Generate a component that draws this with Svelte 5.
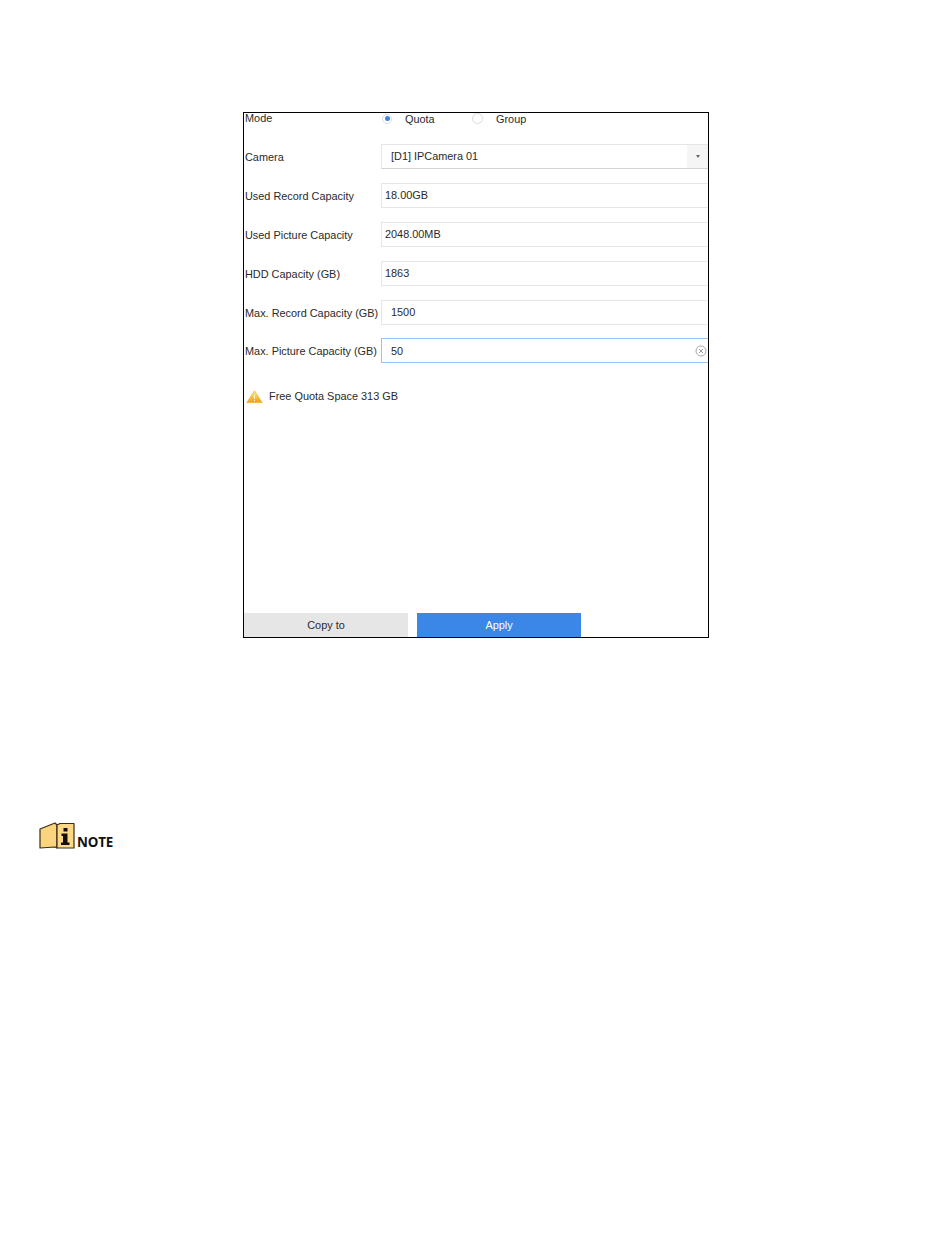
<script>
  const rows = [
    { label: 'Used Record Capacity', value: '18.00GB' },
    { label: 'Used Picture Capacity', value: '2048.00MB' },
    { label: 'HDD Capacity (GB)', value: '1863' },
    { label: 'Max. Record Capacity (GB)', value: '1500', indent: true }
  ];
</script>

<main class="page">
  <section class="panel">
    <div class="mode">
      <span class="label">Mode</span>
      <div class="radios">
        <span class="radio on"></span><span class="opt quota">Quota</span>
        <span class="radio"></span><span class="opt">Group</span>
      </div>
    </div>

    <div class="row">
      <span class="label">Camera</span>
      <div class="field select">
        <span class="val indent">[D1] IPCamera 01</span>
        <span class="arrow"><i></i></span>
      </div>
    </div>

    {#each rows as r}
      <div class="row">
        <span class="label">{r.label}</span>
        <div class="field"><span class="val" class:indent={r.indent}>{r.value}</span></div>
      </div>
    {/each}

    <div class="row">
      <span class="label">Max. Picture Capacity (GB)</span>
      <div class="field focus">
        <span class="val indent">50</span>
        <svg class="clear" width="12" height="12" viewBox="0 0 12 12">
          <circle cx="6" cy="6" r="5" fill="none" stroke="#a8a8a8" />
          <path d="M4 4l4 4M8 4l-4 4" stroke="#999" fill="none" />
        </svg>
      </div>
    </div>

    <div class="warn">
      <svg width="17" height="14" viewBox="0 0 17 14">
        <defs>
          <linearGradient id="w" x1="0" y1="0" x2="0" y2="1">
            <stop offset="0" stop-color="#fdf0b8" />
            <stop offset=".5" stop-color="#f8c73f" />
            <stop offset="1" stop-color="#ee9d12" />
          </linearGradient>
        </defs>
        <path d="M8.5 .8 16.2 12.6H.8z" fill="url(#w)" stroke="#f0b030" stroke-width=".7" stroke-linejoin="round" />
        <rect x="8" y="5" width="1" height="4" fill="#fff6d8" />
        <rect x="8" y="10" width="1" height="1.200" fill="#fff6d8" />
      </svg>
      <span>Free Quota Space 313 GB</span>
    </div>

    <div class="buttons">
      <button class="copy">Copy to</button>
      <button class="apply">Apply</button>
    </div>
  </section>

  <div class="note">
    <svg width="36" height="28" viewBox="0 0 36 28">
      <path d="M1 7 L16 1 L18 3 V26 L16 25 L1 26z" fill="#fbd47e" stroke="#3a2e16" stroke-width="1.200" stroke-linejoin="round" />
      <path d="M18 3 L21 1.500 H35 V26 H21 L18 26z" fill="#fdd987" stroke="#3a2e16" stroke-width="1.200" stroke-linejoin="round" />
      <rect x="24.500" y="6" width="4" height="3.500" fill="#111" />
      <path d="M22.500 11.500h6v9h2v2.500h-8.500v-2.500h2v-6.500h-1.500z" fill="#111" />
    </svg>
    <span>NOTE</span>
  </div>
</main>

<style>
  :global(body) {
    margin: 0;
    background: #fff;
  }

  .page {
    height: 1241px;
    box-sizing: border-box;
    padding-top: 112px;
    font-family: "Liberation Sans", Arial, sans-serif;
    font-size: 10.9px;
    color: #2a2a2a;
    overflow: hidden;
  }

  .panel {
    margin-left: 243px;
    width: 466px;
    height: 526px;
    box-sizing: border-box;
    border: 1px solid #000;
    display: flex;
    flex-direction: column;
    overflow: hidden;
  }

  .mode {
    display: flex;
    align-items: center;
    height: 11px;
    margin-bottom: 20px;
  }

  .label {
    width: 137px;
    flex: none;
    padding-left: 1px;
    box-sizing: border-box;
    white-space: nowrap;
  }

  .mode .label {
    padding-bottom: 1px;
  }

  .radios {
    display: flex;
    align-items: center;
  }

  .radio {
    width: 11px;
    height: 11px;
    border: 1px solid #dcdcdc;
    border-radius: 50%;
    box-sizing: border-box;
    display: flex;
    align-items: center;
    justify-content: center;
  }

  .radio.on {
    width: 10px;
    height: 10px;
    margin-left: 1px;
  }

  .radio.on::after {
    content: "";
    width: 5px;
    height: 5px;
    border-radius: 50%;
    background: #3a87e8;
  }

  .opt {
    margin-left: 13px;
  }

  .quota {
    width: 67px;
  }

  .row {
    display: flex;
    align-items: center;
    height: 25px;
    margin-bottom: 14px;
  }

  .field {
    flex: 1;
    height: 25px;
    box-sizing: border-box;
    border: 1px solid #e6e6e6;
    border-right: none;
    display: flex;
    align-items: center;
    position: relative;
  }

  .val {
    padding-left: 3px;
    padding-bottom: 1px;
  }

  .val.indent {
    padding-left: 9px;
  }

  .select {
    border-bottom-color: #d4d4d4;
    justify-content: space-between;
  }

  .arrow {
    width: 21px;
    height: 23px;
    background: #f5f5f5;
    display: flex;
    align-items: center;
    justify-content: center;
  }

  .arrow i {
    width: 0;
    height: 0;
    border-left: 2.5px solid transparent;
    border-right: 2.5px solid transparent;
    border-top: 3px solid #666;
  }

  .row:has(.focus) {
    margin-top: -1px;
  }

  .field.focus {
    border-color: #9cc0f2;
  }

  .field.focus .val {
    padding-bottom: 0;
  }

  .clear {
    position: absolute;
    right: 1px;
    top: 6px;
  }

  .warn {
    display: flex;
    align-items: center;
    gap: 6px;
    margin-top: 11px;
    padding-left: 2px;
    height: 17px;
    flex: none;
  }

  .warn span {
    padding-bottom: 1px;
  }

  .buttons {
    margin-top: auto;
    display: flex;
    gap: 9px;
  }

  button {
    width: 164px;
    height: 24px;
    border: none;
    padding: 0;
    font: inherit;
  }

  .copy {
    background: #e6e6e6;
    color: #2a2a2a;
  }

  .apply {
    background: #3a87e8;
    color: #fff;
  }

  .note {
    margin: 184px 0 0 39px;
    display: flex;
    align-items: flex-end;
    gap: 2px;
  }

  .note span {
    font-family: "Open Sans", sans-serif;
    font-weight: 700;
    font-size: 13.4px;
    line-height: 16px;
    color: #111;
    letter-spacing: -0.2px;
  }
</style>
